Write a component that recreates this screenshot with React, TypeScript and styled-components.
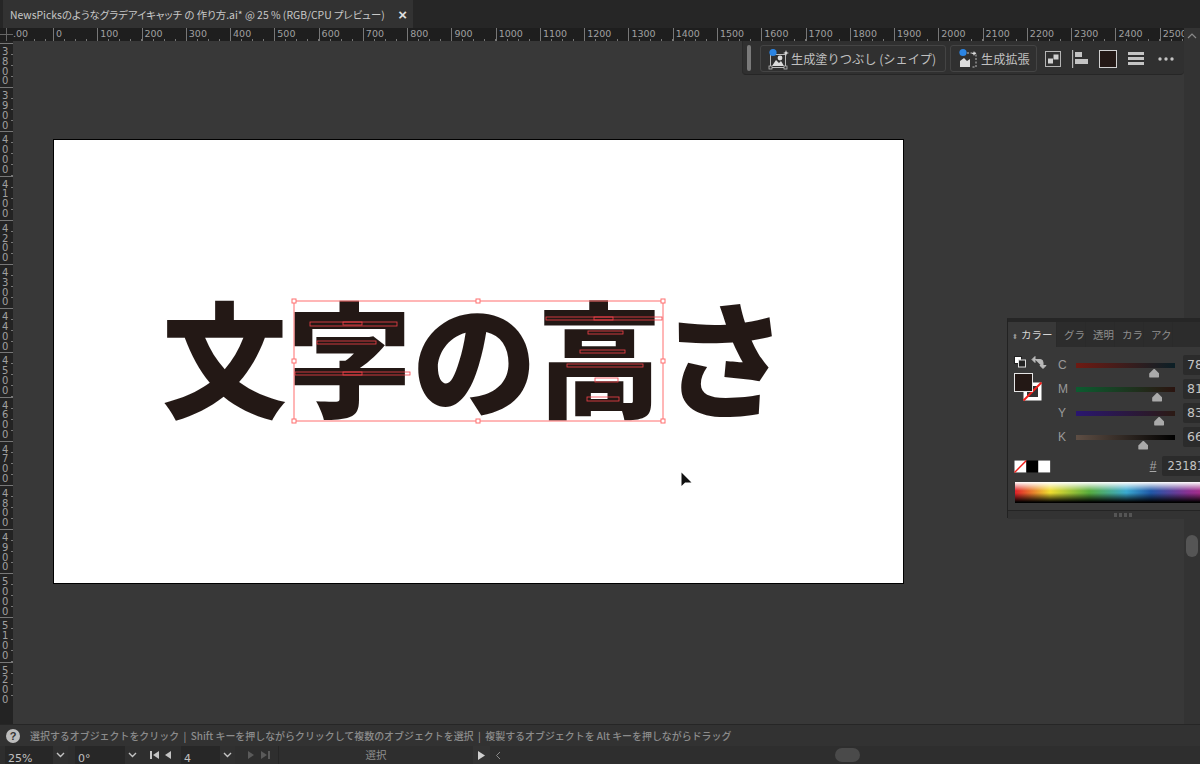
import React from 'react';
import styled, { createGlobalStyle } from 'styled-components';

const GlobalStyle = createGlobalStyle`
  html, body {
    margin: 0;
    padding: 0;
    background: #383838;
    font-family: 'Noto Sans CJK JP', 'Noto Sans', sans-serif;
  }
`;

const hLabels = ['.00', '0', '100', '200', '300', '400', '500', '600', '700', '800', '900', '1000', '1100', '1200', '1300', '1400', '1500', '1600', '1700', '1800', '1900', '2000', '2100', '2200', '2300', '2400', '2500'];
const vLabels = ['3800', '3900', '4000', '4100', '4200', '4300', '4400', '4500', '4600', '4700', '4800', '4900', '5000', '5100', '5200'];

const sliders = [
  { name: 'C', value: '78', at: 79, from: '#6e1a12', to: '#0b1f26' },
  { name: 'M', value: '81', at: 82, from: '#0c5c30', to: '#2b1410' },
  { name: 'Y', value: '83', at: 84, from: '#2a1670', to: '#2b1a14' },
  { name: 'K', value: '66', at: 68, from: '#5e4e44', to: '#000000' },
];

const innerRects = [
  [310, 322, 87, 4], [343, 322, 19, 3], [317, 341, 59, 3], [295, 372, 115, 3], [343, 372, 19, 3],
  [546, 317, 116, 3], [594, 317, 19, 3], [588, 331, 35, 3], [580, 350, 45, 3], [567, 364, 76, 3],
  [595, 378, 23, 4], [587, 397, 32, 4],
];

const handles = [
  [294, 301], [478, 301], [663, 301], [294, 361], [663, 361], [294, 421], [478, 421], [663, 421],
];

const Chevron = () => (
  <svg width="9" height="6" viewBox="0 0 9 6" fill="none">
    <path d="M1 1l3.5 3.5L8 1" stroke="#c4c4c4" strokeWidth="1.4" />
  </svg>
);

export default function App() {
  return (
    <Root>
      <GlobalStyle />
      <TabStrip>
        <Tab>
          <TabTitle>NewsPicksのようなグラデアイキャッチ の 作り方.ai* @ 25 % (RGB/CPU プレビュー)</TabTitle>
          <TabClose>×</TabClose>
        </Tab>
      </TabStrip>

      <Body>
        <Workspace>
          <HRulerRow>
            <RulerCorner />
            {hLabels.map((label, i) => (
              <HCell key={label} $first={i === 0}>{label}</HCell>
            ))}
          </HRulerRow>
          <CanvasRow>
            <VRuler>
              {vLabels.map((label) => (
                <VCell key={label}>
                  {label.split('').map((digit, i) => (
                    <span key={i}>{digit}</span>
                  ))}
                </VCell>
              ))}
            </VRuler>
            <Canvas>
              <Artboard>
                <BigText>文字の高さ</BigText>
                <SelectionSvg viewBox="54 140 849 443">
                  <rect x="294" y="301" width="369" height="120" fill="none" stroke="#ff6f6f" strokeWidth="1" />
                  {innerRects.map(([x, y, w, h], i) => (
                    <rect key={i} x={x} y={y} width={w} height={h} fill="none" stroke="#f4424a" strokeWidth="0.8" />
                  ))}
                  {handles.map(([x, y], i) => (
                    <rect key={i} x={x - 2} y={y - 2} width="4" height="4" fill="#fff" stroke="#ff6f6f" strokeWidth="1" />
                  ))}
                </SelectionSvg>
                <Cursor width="12" height="16" viewBox="0 0 12 16">
                  <path d="M0.5 0.5v13.5l3.6-3.6h6.4z" fill="#111" />
                </Cursor>
              </Artboard>
            </Canvas>
          </CanvasRow>
        </Workspace>
        <VScroll>
          <svg width="10" height="6" viewBox="0 0 10 6" fill="none">
            <path d="M1 5l4-4 4 4" stroke="#8a8a8a" strokeWidth="1.2" />
          </svg>
          <VThumb />
        </VScroll>

        <ControlBar>
          <Grip />
          <GenButton $width={186}>
            <svg width="24" height="22" viewBox="0 0 24 22" fill="none">
              <rect x="3.5" y="6.5" width="15" height="13" fill="none" stroke="#bbb" strokeWidth="1" />
              <path d="M5 18l4-6 3 3 2-2 3 5z" fill="#ddd" />
              <circle cx="13" cy="10" r="2.4" fill="#ddd" />
              <path d="M19 2l.8 2.2L22 5l-2.2.8L19 8l-.8-2.2L16 5l2.2-.8z" fill="#ddd" />
              <circle cx="6" cy="4.5" r="3.6" fill="#2b85e4" />
              <rect x="2" y="18" width="3" height="3" fill="#333" stroke="#bbb" strokeWidth="0.8" />
              <rect x="17" y="18" width="3" height="3" fill="#333" stroke="#bbb" strokeWidth="0.8" />
            </svg>
            <span>生成塗りつぶし (シェイプ)</span>
          </GenButton>
          <GenButton $width={87}>
            <svg width="24" height="22" viewBox="0 0 24 22" fill="none">
              <path d="M3 19v-6l4-3 3 3 3-2v8z" fill="#ddd" />
              <path d="M10 5h9v14h-5" stroke="#bbb" strokeWidth="1" strokeDasharray="2 1.5" />
              <path d="M17 3l.7 1.8L19.5 5.5l-1.8.7L17 8l-.7-1.8-1.8-.7 1.8-.7z" fill="#ddd" />
              <circle cx="6" cy="4.5" r="3.6" fill="#2b85e4" />
            </svg>
            <span>生成拡張</span>
          </GenButton>
          <BarIcons>
            <svg width="16" height="16" viewBox="0 0 16 16">
              <rect x="0.5" y="0.5" width="15" height="15" fill="none" stroke="#b5b5b5" />
              <rect x="3" y="7.5" width="5" height="5" fill="#d0d0d0" />
              <rect x="8.5" y="3.5" width="5" height="5" fill="#d0d0d0" />
            </svg>
            <svg width="16" height="18" viewBox="0 0 16 18">
              <rect x="0" y="0" width="1.2" height="18" fill="#b5b5b5" />
              <rect x="3" y="2" width="7" height="5" fill="#c4c4c4" />
              <rect x="3" y="9" width="13" height="5" fill="#c4c4c4" />
            </svg>
            <BarSwatch />
            <svg width="16" height="13" viewBox="0 0 16 13">
              <rect width="16" height="3" fill="#c4c4c4" />
              <rect y="5" width="16" height="3" fill="#c4c4c4" />
              <rect y="10" width="16" height="3" fill="#c4c4c4" />
            </svg>
            <DotsIcon width="16" height="4" viewBox="0 0 16 4">
              <circle cx="2" cy="2" r="1.7" fill="#c4c4c4" />
              <circle cx="8" cy="2" r="1.7" fill="#c4c4c4" />
              <circle cx="14" cy="2" r="1.7" fill="#c4c4c4" />
            </DotsIcon>
          </BarIcons>
        </ControlBar>

        <ColorPanel>
          <PanelTabs>
            <PanelTab $active>
              <TabStepper>⬍</TabStepper>カラー
            </PanelTab>
            <PanelTab>グラデ</PanelTab>
            <PanelTab>透明</PanelTab>
            <PanelTab>カラー</PanelTab>
            <PanelTab>アクシ</PanelTab>
          </PanelTabs>
          <PanelBody>
            <SwatchColumn>
              <svg width="34" height="48" viewBox="0 0 34 48">
                <rect x="0.5" y="1.5" width="7" height="7" fill="#fff" stroke="#222" />
                <rect x="4.5" y="5" width="7" height="7" fill="#222" stroke="#ddd" />
                <path d="M21 4.5h5a3 3 0 0 1 3 3v5M21 1.5v6l-3-3zM26 10.5h6l-3 3z" fill="#b9b9b9" stroke="#b9b9b9" strokeWidth="1" />
                <rect x="9.5" y="27.5" width="18" height="18" fill="#fff" />
                <rect x="13" y="31" width="11" height="11" fill="#333" />
                <path d="M9.5 45.5l18-18" stroke="#f0201c" strokeWidth="2" />
                <rect x="0.5" y="18.5" width="18" height="18" fill="#231815" stroke="#e6e6e6" />
              </svg>
            </SwatchColumn>
            <SliderColumn>
              {sliders.map((s) => (
                <SliderRow key={s.name}>
                  <SliderName>{s.name}</SliderName>
                  <Track $from={s.from} $to={s.to}>
                    <Thumb style={{ left: `${s.at}%` }} />
                  </Track>
                  <ValueBox>{s.value}</ValueBox>
                </SliderRow>
              ))}
            </SliderColumn>
          </PanelBody>
          <HexRow>
            <svg width="37" height="13" viewBox="0 0 37 13">
              <rect x="0.5" y="0.5" width="12" height="12" fill="#fff" />
              <path d="M0.5 12.5l12-12" stroke="#f0201c" strokeWidth="1.5" />
              <rect x="12.5" y="0.5" width="12" height="12" fill="#000" />
              <rect x="24.5" y="0.5" width="12" height="12" fill="#fff" />
            </svg>
            <HexMark>#</HexMark>
            <HexInput>23181</HexInput>
          </HexRow>
          <Spectrum />
          <PanelFoot>
            <svg width="18" height="4" viewBox="0 0 18 4">
              <rect width="3" height="4" fill="#555" />
              <rect x="5" width="3" height="4" fill="#555" />
              <rect x="10" width="3" height="4" fill="#555" />
              <rect x="15" width="3" height="4" fill="#555" />
            </svg>
          </PanelFoot>
        </ColorPanel>
      </Body>

      <HelpBar>
        <HelpDot>?</HelpDot>
        <HelpText>選択するオブジェクトをクリック&nbsp;&nbsp;|&nbsp;&nbsp;Shift キーを押しながらクリックして複数のオブジェクトを選択&nbsp;&nbsp;|&nbsp;&nbsp;複製するオブジェクトを Alt キーを押しながらドラッグ</HelpText>
      </HelpBar>

      <BottomBar>
        <Field $width={48}>25%</Field>
        <ChevronBox><Chevron /></ChevronBox>
        <Field $width={50}>0°</Field>
        <ChevronBox><Chevron /></ChevronBox>
        <Pager $pad={3}>
          <svg width="26" height="10" viewBox="0 0 26 10">
            <rect x="0" y="1" width="2" height="8" fill="#c4c4c4" />
            <path d="M9 1v8L3 5zM21 1v8l-6-4z" fill="#c4c4c4" />
          </svg>
        </Pager>
        <Field $width={39}>4</Field>
        <ChevronBox><Chevron /></ChevronBox>
        <Pager $pad={5}>
          <svg width="24" height="10" viewBox="0 0 24 10">
            <path d="M1 1v8l6-4zM14 1v8l6-4z" fill="#5a5a5a" />
            <rect x="21" y="1" width="2" height="8" fill="#5a5a5a" />
          </svg>
        </Pager>
        <ModeLabel>選択</ModeLabel>
        <PlayBox>
          <svg width="7" height="9" viewBox="0 0 7 9"><path d="M0 0v9l7-4.5z" fill="#d0d0d0" /></svg>
        </PlayBox>
        <HTrack>
          <svg width="6" height="9" viewBox="0 0 6 9" fill="none"><path d="M5 1L1.5 4.5 5 8" stroke="#8a8a8a" strokeWidth="1" /></svg>
          <HThumb />
        </HTrack>
      </BottomBar>
    </Root>
  );
}

const Root = styled.div`
  position: relative;
  width: 1200px;
  height: 764px;
  overflow: hidden;
  display: flex;
  flex-direction: column;
  background: #383838;
`;

const TabStrip = styled.div`
  height: 28px;
  flex: none;
  background: #262626;
  padding-left: 3px;
`;

const Tab = styled.div`
  width: 410px;
  height: 28px;
  box-sizing: border-box;
  padding: 0 6px 0 7px;
  background: #323232;
  display: flex;
  align-items: center;
  justify-content: space-between;
`;

const TabTitle = styled.span`
  font-size: 10.4px;
  font-feature-settings: 'palt';
  color: #c8c8c8;
  white-space: nowrap;
`;

const TabClose = styled.span`
  font: bold 15px 'Liberation Sans', sans-serif;
  color: #dedede;
`;

const Body = styled.div`
  position: relative;
  flex: 1;
  display: flex;
  min-height: 0;
`;

const Workspace = styled.div`
  flex: 1;
  min-width: 0;
  display: flex;
  flex-direction: column;
`;

const HRulerRow = styled.div`
  height: 13px;
  flex: none;
  display: flex;
  background: #1e1e1e;
  overflow: hidden;
`;

const RulerCorner = styled.div`
  width: 13px;
  flex: none;
  box-sizing: border-box;
  background:
    linear-gradient(#666, #666) 6px 0 / 1px 100% no-repeat,
    linear-gradient(#666, #666) 0 6px / 100% 1px no-repeat,
    #1e1e1e;
`;

const HCell = styled.div<{ $first?: boolean }>`
  width: ${(p) => (p.$first ? '40px' : '44.28px')};
  flex: none;
  box-sizing: border-box;
  height: 13px;
  padding-left: ${(p) => (p.$first ? '0' : '2px')};
  border-left: ${(p) => (p.$first ? '0' : '1px solid #777')};
  font: 9.5px/11px 'DejaVu Sans', sans-serif;
  color: #a0a0a0;
  background:
    repeating-linear-gradient(90deg, transparent 0 10.07px, #777 10.07px 11.07px) 0 100% / 100% 2px no-repeat;
`;

const CanvasRow = styled.div`
  flex: 1;
  display: flex;
  min-height: 0;
`;

const VRuler = styled.div`
  width: 13px;
  flex: none;
  background: #232323;
  overflow: hidden;
  padding-top: 2px;
`;

const VCell = styled.div`
  height: 44.2px;
  box-sizing: border-box;
  border-top: 1px solid #777;
  padding: 3px 0 0 2px;
  display: flex;
  flex-direction: column;
  font: 10px/9.8px 'DejaVu Sans', sans-serif;
  color: #a0a0a0;
  background:
    repeating-linear-gradient(180deg, transparent 0 10px, #777 10px 11px) 100% 0 / 2px 100% no-repeat;
`;

const Canvas = styled.div`
  flex: 1;
  min-width: 0;
  background: #383838;
  padding: 98px 0 0 40px;
`;

const Artboard = styled.div`
  position: relative;
  width: 851px;
  height: 445px;
  box-sizing: border-box;
  background: #fff;
  border: 1px solid #000;
  padding: 134px 0 0 108px;
`;

const BigText = styled.div`
  font-size: 125px;
  line-height: 160px;
  font-weight: 900;
  color: #231815;
  white-space: nowrap;
`;

const SelectionSvg = styled.svg`
  position: absolute;
  left: 0;
  top: 0;
  width: 100%;
  height: 100%;
`;

const Cursor = styled.svg`
  position: absolute;
  left: 627px;
  top: 332px;
`;

const VScroll = styled.div`
  width: 16px;
  flex: none;
  background: #333;
  display: flex;
  flex-direction: column;
  align-items: center;
  padding-top: 5px;
`;

const VThumb = styled.div`
  width: 12px;
  height: 22px;
  margin-top: 496px;
  border-radius: 6px;
  background: #555;
`;

const ControlBar = styled.div`
  position: absolute;
  left: 742px;
  top: 13px;
  width: 442px;
  height: 34px;
  box-sizing: border-box;
  padding: 4px 0 0 4px;
  display: flex;
  align-items: flex-start;
  gap: 4px;
  background: #303030;
  border-bottom: 1px solid #262626;
  border-left: 1px solid #2a2a2a;
  border-radius: 0 0 4px 4px;
`;

const Grip = styled.div`
  width: 4px;
  height: 26px;
  margin-right: 5px;
  border-radius: 2px;
  background: #7a7a7a;
`;

const GenButton = styled.div<{ $width: number }>`
  width: ${(p) => p.$width}px;
  height: 27px;
  box-sizing: border-box;
  padding-left: 6px;
  display: flex;
  align-items: center;
  border: 1px solid #444;
  border-radius: 3px;
  font-size: 12.2px;
  color: #c0c0c0;
  white-space: nowrap;
`;

const BarIcons = styled.div`
  height: 27px;
  margin-left: 4px;
  display: flex;
  align-items: center;
  gap: 11px;
`;

const DotsIcon = styled.svg`
  margin-left: 3px;
`;

const BarSwatch = styled.div`
  width: 16px;
  height: 16px;
  background: #231815;
  border: 1px solid #d0d0d0;
`;

const ColorPanel = styled.div`
  position: absolute;
  left: 1007px;
  top: 290px;
  width: 215px;
  height: 200px;
  box-sizing: border-box;
  background: #383838;
  border: 1px solid #222;
  border-top: 4px solid #262626;
  display: flex;
  flex-direction: column;
`;

const PanelTabs = styled.div`
  height: 25px;
  flex: none;
  display: flex;
  background: #2c2c2c;
`;

const PanelTab = styled.div<{ $active?: boolean }>`
  width: ${(p) => (p.$active ? '49px' : '29px')};
  flex: none;
  box-sizing: border-box;
  padding-left: ${(p) => (p.$active ? '4px' : '7px')};
  overflow: hidden;
  white-space: nowrap;
  font-size: 10.5px;
  line-height: 25px;
  color: ${(p) => (p.$active ? '#d4d4d4' : '#8e8e8e')};
  background: ${(p) => (p.$active ? '#383838' : 'transparent')};
  border-right: 1px solid #2a2a2a;
`;

const TabStepper = styled.span`
  font-size: 7px;
  margin-right: 3px;
  color: #999;
`;

const PanelBody = styled.div`
  display: flex;
  padding: 8px 0 0 6px;
`;

const SwatchColumn = styled.div`
  width: 44px;
  flex: none;
`;

const SliderColumn = styled.div`
  display: flex;
  flex-direction: column;
  gap: 4px;
`;

const SliderRow = styled.div`
  height: 20px;
  display: flex;
  align-items: center;
`;

const SliderName = styled.span`
  width: 18px;
  flex: none;
  font: 12px 'Liberation Sans', sans-serif;
  color: #9a9a9a;
`;

const Track = styled.div<{ $from: string; $to: string }>`
  position: relative;
  width: 99px;
  height: 5px;
  flex: none;
  background: linear-gradient(90deg, ${(p) => p.$from}, ${(p) => p.$to});
`;

const Thumb = styled.div`
  position: absolute;
  top: 6px;
  width: 10px;
  height: 9px;
  margin-left: -5px;
  background: #aaa;
  border-radius: 0 0 1px 1px;
  clip-path: polygon(50% 0, 100% 55%, 100% 100%, 0 100%, 0 55%);
`;

const ValueBox = styled.div`
  width: 40px;
  height: 20px;
  margin-left: 8px;
  box-sizing: border-box;
  padding-left: 4px;
  flex: none;
  background: #2b2b2b;
  border-radius: 2px;
  font: 12.5px/20px 'DejaVu Sans', sans-serif;
  color: #c4c4c4;
`;

const HexRow = styled.div`
  height: 20px;
  margin-top: 9px;
  padding-left: 6px;
  display: flex;
  align-items: center;
`;

const HexMark = styled.span`
  margin-left: 99px;
  width: 10px;
  font: 12px 'Liberation Sans', sans-serif;
  color: #a8a8a8;
  text-decoration: underline;
`;

const HexInput = styled.div`
  width: 60px;
  height: 20px;
  margin-left: 2px;
  box-sizing: border-box;
  padding-left: 6px;
  background: #2b2b2b;
  border-radius: 2px;
  font: 11.5px/20px 'DejaVu Sans', sans-serif;
  color: #c4c4c4;
`;

const Spectrum = styled.div`
  height: 21px;
  margin: 6px 0 0 7px;
  flex: none;
  background:
    linear-gradient(180deg, #fff 0%, rgba(255, 255, 255, 0) 42%, rgba(0, 0, 0, 0) 52%, #000 96%),
    linear-gradient(90deg, #e0202a 0%, #efdc30 17%, #58ad3e 36%, #3aa9d0 54%, #2058a8 66%, #8a3192 84%, #d0257a 100%);
`;

const PanelFoot = styled.div`
  margin-top: 7px;
  height: 8px;
  flex: none;
  padding-left: 106px;
  border-top: 1px solid #242424;
  background: #333;

  svg {
    display: block;
    margin-top: 2px;
  }
`;

const HelpBar = styled.div`
  height: 22px;
  flex: none;
  box-sizing: border-box;
  padding-left: 6px;
  display: flex;
  align-items: center;
  background: #323232;
  border-top: 1px solid #262626;
`;

const HelpDot = styled.div`
  width: 14px;
  height: 14px;
  border-radius: 50%;
  background: #bdbdbd;
  color: #333;
  font: bold 11px/14px 'Liberation Sans', sans-serif;
  text-align: center;
`;

const HelpText = styled.span`
  margin-left: 10px;
  font-size: 9.95px;
  font-weight: 500;
  color: #8c8c8c;
  white-space: nowrap;
`;

const BottomBar = styled.div`
  height: 18px;
  flex: none;
  padding-left: 5px;
  display: flex;
  align-items: flex-start;
  background: #2e2e2e;
  overflow: hidden;
`;

const Field = styled.div<{ $width: number }>`
  width: ${(p) => p.$width}px;
  height: 24px;
  flex: none;
  box-sizing: border-box;
  padding: 4px 0 0 3px;
  background: #272727;
  font: 11px/18px 'DejaVu Sans', sans-serif;
  color: #c0c0c0;
`;

const ChevronBox = styled.div`
  width: 15px;
  height: 18px;
  flex: none;
  margin-right: 7px;
  display: flex;
  align-items: center;
  justify-content: center;
  background: #303030;
`;

const Pager = styled.div<{ $pad: number }>`
  height: 18px;
  flex: none;
  margin-right: 5px;
  padding-left: ${(p) => p.$pad}px;
  display: flex;
  align-items: center;
`;

const ModeLabel = styled.div`
  width: 194px;
  flex: none;
  margin-left: 2px;
  border-left: 1px solid #262626;
  text-align: center;
  font-size: 10.5px;
  line-height: 18px;
  color: #8e8e8e;
`;

const PlayBox = styled.div`
  width: 17px;
  height: 18px;
  flex: none;
  display: flex;
  align-items: center;
  justify-content: center;
  background: #333;
`;

const HTrack = styled.div`
  flex: 1;
  height: 18px;
  padding-left: 5px;
  display: flex;
  align-items: center;
`;

const HThumb = styled.div`
  width: 25px;
  height: 14px;
  margin-left: 334px;
  border-radius: 7px;
  background: #4a4a4a;
`;
